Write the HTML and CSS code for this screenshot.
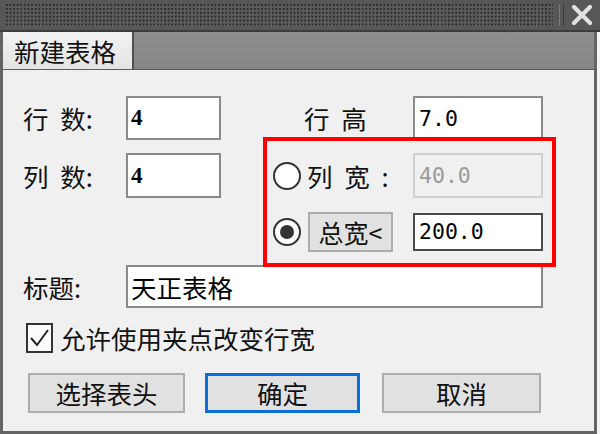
FILE: index.html
```html
<!DOCTYPE html>
<html lang="zh-CN">
<head>
    <meta charset="UTF-8">
    <title>新建表格</title>
    <link rel="stylesheet" href="styles.css">
</head>
<body>
    <div class="window">
        <div class="titlebar">
            <div class="grip"></div>
            <div class="sep"></div>
            <div class="close">
                <svg width="22" height="20" viewBox="0 0 22 20">
                    <path d="M3 2 L19 18 M19 2 L3 18" stroke="#e2e2e2" stroke-width="4.2" stroke-linecap="round"/>
                </svg>
            </div>
        </div>

        <div class="frame">
            <div class="tabs">
                <div class="tab">新建表格</div>
            </div>

            <div class="panel">
                <div class="grid">
                    <!-- row 1 -->
                    <label class="lbl">行 数:</label>
                    <input class="field serif" type="text" value="4">
                    <label class="lbl lbl-high">行 高</label>
                    <input class="field mono" type="text" value="7.0">

                    <!-- row 2 -->
                    <label class="lbl">列 数:</label>
                    <input class="field serif" type="text" value="4">
                    <div class="opt">
                        <span class="radio"></span>
                        <span class="lbl">列 宽 :</span>
                    </div>
                    <input class="field mono" type="text" value="40.0" disabled>

                    <!-- row 3 -->
                    <div class="empty"></div>
                    <div class="empty"></div>
                    <div class="opt">
                        <span class="radio checked"></span>
                        <button class="btn small">总宽&lt;</button>
                    </div>
                    <input class="field mono focus" type="text" value="200.0">

                    <!-- row 4 -->
                    <label class="lbl">标题:</label>
                    <input class="field wide" type="text" value="天正表格">
                </div>

                <div class="check-row">
                    <span class="checkbox">
                        <svg width="23" height="26" viewBox="0 0 23 26">
                            <path d="M3 13 L9 20 L20 5" fill="none" stroke="#222" stroke-width="2"/>
                        </svg>
                    </span>
                    <span class="lbl">允许使用夹点改变行宽</span>
                </div>

                <div class="actions">
                    <button class="btn b1">选择表头</button>
                    <button class="btn b2 default">确定</button>
                    <button class="btn b3">取消</button>
                </div>
            </div>
        </div>

        <!-- red annotation drawn over the dialog -->
        <div class="mark"></div>
    </div>
</body>
</html>
```

FILE: styles.css
```css
body {
    margin: 0;
    background-color: #f3f3f3;
    font-family: "Noto Sans CJK SC", sans-serif;
}

.window {
    position: relative;
    width: 600px;
    height: 434px;
}

/* title bar */
.titlebar {
    height: 30px;
    background-color: #575757;
    border-bottom: 2px solid #3c3c3c;
    display: flex;
    align-items: center;
    padding-left: 6px;
}

.grip {
    width: 547px;
    height: 23px;
    background-color: #2a2a2a;
    background-image:
        linear-gradient(90deg, transparent 2px, #5c5c5c 2px),
        linear-gradient(transparent 2px, #5c5c5c 2px);
    background-size: 3.6px 3.9px;
}

.sep {
    width: 3px;
    height: 22px;
    margin-left: 6px;
    border-left: 1px solid #7a7a7a;
    border-right: 1px solid #3a3a3a;
}

.close {
    margin-left: 7px;
    display: flex;
}

/* frame */
.frame {
    width: 597px;
    height: 402px;
    box-sizing: border-box;
    border: 3px solid #646464;
    border-top: none;
    display: flex;
    flex-direction: column;
}

.tabs {
    height: 38px;
    background: linear-gradient(#8e8e8e, #868686);
    border-bottom: 1px solid #5c5c5c;
    box-sizing: border-box;
    display: flex;
}

.tab {
    width: 131px;
    box-sizing: border-box;
    padding-left: 11px;
    background: linear-gradient(#f2f2f2, #e4e4e4);
    border-right: 2px solid #505050;
    font-size: 25.5px;
    line-height: 37px;
    color: #111;
}

.panel {
    flex: 1;
    background-color: #f0f0f0;
    padding: 26px 0 0 20px;
}

/* form grid */
.grid {
    display: grid;
    grid-template-columns: 103px 95px 192px 130px;
    grid-template-rows: 44px 45px 41px 43px;
    row-gap: 13px;
    align-items: center;
}

.lbl {
    font-size: 25.5px;
    color: #111;
    word-spacing: 6px;
    white-space: nowrap;
    line-height: 30px;
}

.lbl-high {
    padding-left: 83px;
}

.field {
    height: 100%;
    box-sizing: border-box;
    border: 2px solid #8a8a8a;
    background-color: #fff;
    padding: 0 3px;
    margin: 0;
    color: #000;
    outline: none;
}

.serif {
    font-family: "Liberation Serif", serif;
    font-weight: bold;
    font-size: 23px;
}

.mono {
    font-family: "DejaVu Sans Mono", monospace;
    font-size: 21.5px;
    padding-left: 4px;
}

.field:disabled {
    background-color: #f0f0f0;
    border-color: #d0d0d0;
    color: #9a9a9a;
}

.field.focus {
    border-color: #4a4a4a;
    height: 38px;
}

.wide {
    grid-column: 2 / 5;
    font-size: 25.5px;
    font-family: "Noto Sans CJK SC", sans-serif;
}

.opt {
    display: flex;
    align-items: center;
    padding-left: 52px;
    gap: 6px;
}

.radio {
    width: 28px;
    height: 28px;
    box-sizing: border-box;
    border: 2px solid #333;
    border-radius: 50%;
    background-color: #fff;
    display: flex;
    align-items: center;
    justify-content: center;
}

.radio.checked::after {
    content: "";
    width: 14px;
    height: 14px;
    border-radius: 50%;
    background-color: #333;
}

/* buttons */
.btn {
    font-family: "Noto Sans CJK SC", sans-serif;
    font-size: 25.5px;
    color: #111;
    background-color: #e1e1e1;
    border: 2px solid #adadad;
    height: 40px;
    padding: 0;
    margin: 0;
    line-height: 34px;
}

.btn.small {
    width: 85px;
    margin-left: 1px;
    font-size: 25px;
}

.btn.default {
    border: 3px solid #0a6fd6;
}

/* checkbox line */
.check-row {
    display: flex;
    align-items: center;
    gap: 7px;
    margin-top: 15px;
    margin-left: 3px;
    height: 30px;
}

.checkbox {
    width: 27px;
    height: 30px;
    box-sizing: border-box;
    border: 2px solid #333;
    background-color: #fbfbfb;
    display: flex;
    align-items: center;
    justify-content: center;
}

.actions {
    display: flex;
    margin-top: 20px;
    margin-left: 5px;
}

.b1 { width: 157px; }
.b2 { width: 155px; margin-left: 20px; }
.b3 { width: 159px; margin-left: 22px; }

/* red highlight rectangle */
.mark {
    position: absolute;
    left: 263px;
    top: 137px;
    width: 293px;
    height: 130px;
    box-sizing: border-box;
    border: 4px solid #ff0000;
}
```
